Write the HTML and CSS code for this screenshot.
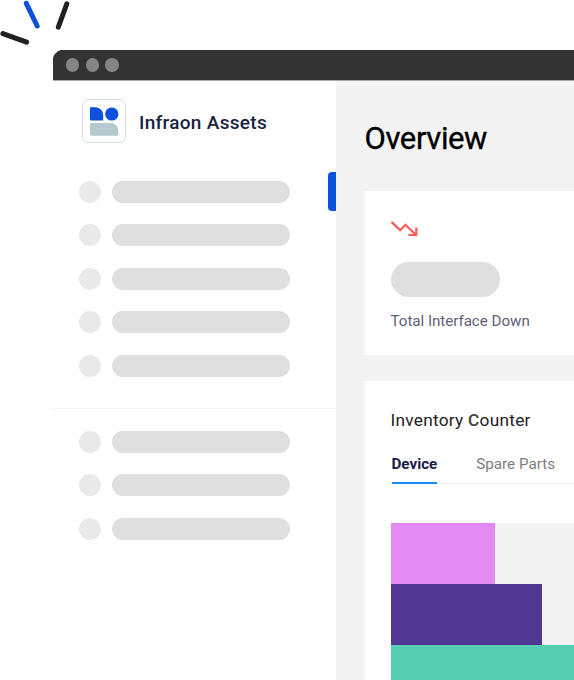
FILE: index.html
```html
<!DOCTYPE html>
<html lang="en">
<head>
<meta charset="utf-8">
<title>Infraon Assets</title>
<link rel="stylesheet" href="styles.css">
</head>
<body>
<svg class="sparks" width="80" height="50" viewBox="0 0 80 50" fill="none" stroke-width="5" stroke-linecap="round">
  <path d="M26.3 3.3 37.2 26" stroke="#0b50da"/>
  <path d="M66.8 3.8 58.3 27.2M2.9 33.6 26.6 42.2" stroke="#231f20"/>
</svg>
<div class="window">
  <header class="titlebar"><i class="light"></i><i class="light"></i><i class="light"></i></header>
  <div class="body">
    <aside class="sidebar">
      <div class="brand">
        <span class="logo">
          <svg width="30" height="30" viewBox="0 0 30 30">
            <path d="M1.3 1.2H6.5C11 1.2 14.2 5 14.2 9.5V14.4H2.5Q1 14.4 1 12.9V1.5Z" fill="#0b50da"/>
            <circle cx="22.8" cy="8" r="6.6" fill="#0b50da"/>
            <path d="M2.3 16.9H21.5C26 16.9 29.3 20.3 29.3 24.8V28.1Q29.3 29.7 27.7 29.7H2.6Q1 29.7 1 28.1V18.2Q1 16.9 2.3 16.9Z" fill="#b5c8ce"/>
          </svg>
        </span>
        <span class="brand-name">Infraon Assets</span>
      </div>
      <div class="menu">
        <div class="row"><i class="dot"></i><i class="pill"></i></div>
        <div class="row"><i class="dot"></i><i class="pill"></i></div>
        <div class="row"><i class="dot"></i><i class="pill"></i></div>
        <div class="row"><i class="dot"></i><i class="pill"></i></div>
        <div class="row"><i class="dot"></i><i class="pill"></i></div>
      </div>
      <div class="menu secondary">
        <div class="row"><i class="dot"></i><i class="pill"></i></div>
        <div class="row"><i class="dot"></i><i class="pill"></i></div>
        <div class="row"><i class="dot"></i><i class="pill"></i></div>
      </div>
      <i class="active-mark"></i>
    </aside>
    <main class="main">
      <h1 class="title">Overview</h1>
      <section class="card stat">
        <svg class="trend" width="28" height="18" viewBox="0 0 28 18" fill="none" stroke="#ff5a5a" stroke-width="2.2">
          <path d="M.4 1.8 9.2 10.3 14.4 4.8 24.8 14.8M17.4 15H25.3V7.5"/>
        </svg>
        <i class="value"></i>
        <p class="label">Total Interface Down</p>
      </section>
      <section class="card inventory">
        <h2 class="heading">Inventory <span class="strong">C</span>ounter</h2>
        <nav class="tabs"><span class="tab active">Device</span><span class="tab">Spare Parts</span></nav>
        <div class="chart">
          <div class="bar pink"></div>
          <div class="bar purple"></div>
          <div class="bar green"></div>
        </div>
      </section>
    </main>
  </div>
</div>
</body>
</html>
```
FILE: styles.css
```css
* { box-sizing: border-box; }
body {
  margin: 0;
  height: 680px;
  overflow: hidden;
  background: #fff;
  font-family: Roboto, "Liberation Sans", sans-serif;
}
h1, h2, p { margin: 0; font-weight: 400; }
.sparks { display: block; }
.window { margin-left: 53px; height: 630px; display: flex; flex-direction: column; }
.titlebar {
  flex: none;
  height: 31px;
  padding: 0 0 0 13px;
  display: flex;
  align-items: center;
  gap: 6.3px;
  background: #333;
  border-bottom: 1px solid #a9a9a9;
  clip-path: polygon(0 8px, 1px 5px, 3px 3px, 5px 1px, 8px 0, 100% 0, 100% 100%, 0 100%);
}
.light { width: 13.4px; height: 13.4px; border-radius: 50%; background: #858585; }
.body { flex: 1; display: flex; min-height: 0; }
.sidebar { position: relative; flex: none; width: 283px; background: #fff; }
.brand { display: flex; align-items: center; gap: 13px; padding: 18px 0 0 29px; }
.logo {
  width: 44px;
  height: 44px;
  display: flex;
  align-items: center;
  justify-content: center;
  border: 1px solid #d5dee1;
  border-radius: 6px;
}
.brand-name { padding-top: 3px; font-size: 19px; font-weight: 500; letter-spacing: .3px; line-height: 24px; color: #172340; white-space: nowrap; }
.menu { display: flex; flex-direction: column; gap: 21.6px; padding: 37.5px 0 31px 26px; }
.row { display: flex; gap: 10.7px; }
.dot { width: 22px; height: 22px; border-radius: 50%; background: #e9e9e9; }
.pill { width: 178.6px; height: 22px; border-radius: 11px; background: #dfdfdf; }
.secondary { border-top: 1.5px solid #f0f0f0; padding-top: 22px; }
.active-mark {
  position: absolute;
  right: 0;
  top: 91px;
  width: 7.6px;
  height: 39px;
  border-radius: 4px 0 0 4px;
  background: #0b50da;
}
.main { flex: 1; min-width: 0; padding: 38px 0 0 28.5px; background: #f3f3f3; }
.title { font-size: 31px; line-height: 40px; height: 72px; color: #000; letter-spacing: -.4px; white-space: nowrap; -webkit-text-stroke: .35px #000; }
.card { background: #fff; padding-left: 26px; }
.stat { height: 164px; padding-top: 29px; }
.trend { display: block; }
.value { display: block; width: 109px; height: 35px; margin-top: 24px; border-radius: 17.5px; background: #dfdfdf; }
.label { margin-top: 14px; font-size: 15.2px; letter-spacing: -.05px; line-height: 20px; color: #62607a; white-space: nowrap; }
.inventory { height: 310px; margin-top: 26px; padding-top: 28px; }
.heading { font-size: 17.3px; letter-spacing: .25px; line-height: 22px; color: #222; white-space: nowrap; }
.strong { font-weight: 500; color: #444; }
.tabs { display: flex; gap: 39px; height: 53px; margin-left: 1px; border-bottom: 1.5px solid #f1f1f1; white-space: nowrap; }
.tab { height: 53px; padding-top: 23px; font-size: 15.2px; line-height: 20px; color: #7d7d7d; }
.active { color: #201b45; font-weight: 700; border-bottom: 2px solid #168cf5; }
.chart { margin-top: 39px; background: #f3f3f3; }
.bar { height: 61px; }
.pink { width: 104.5px; background: #e28af2; }
.purple { width: 151px; background: #503793; }
.green { background: #57cfb3; }
```
